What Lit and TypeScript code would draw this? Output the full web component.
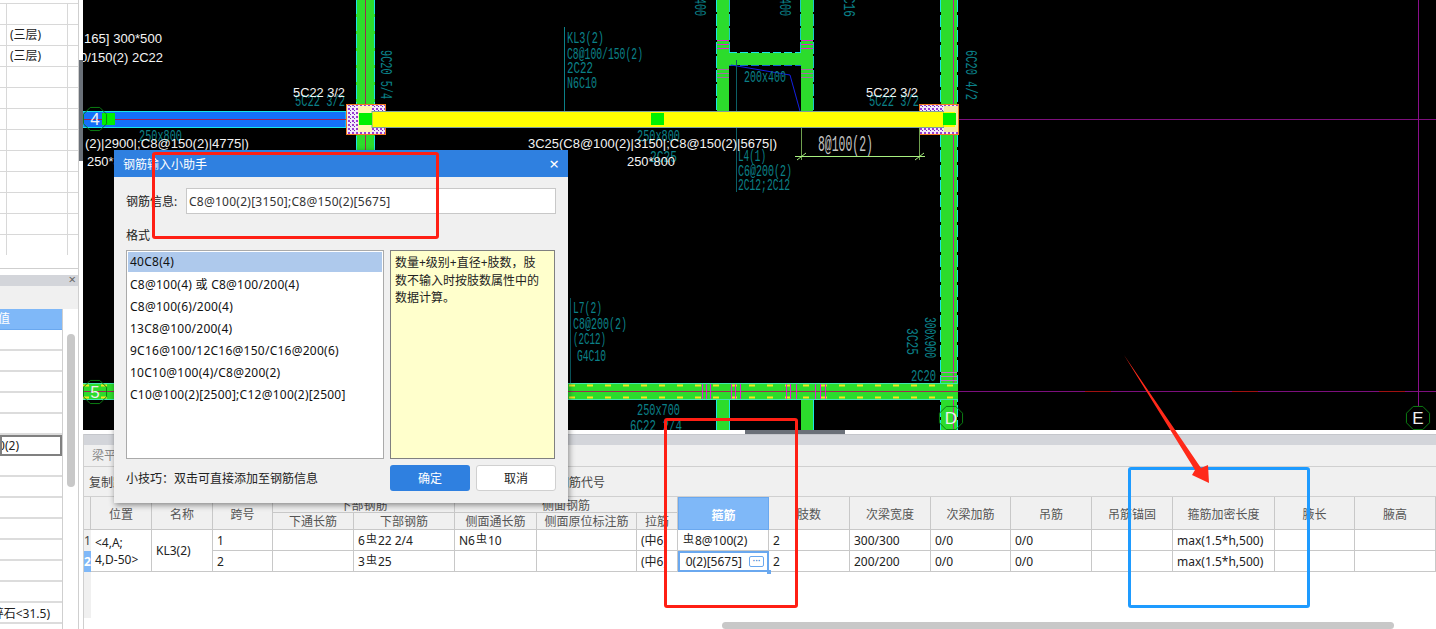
import { css, html, svg, LitElement } from "lit";
import { customElement } from "lit/decorators.js";

const UI_FONT = css`"Noto Sans", "Noto Sans CJK SC", sans-serif`;

// small helpers for the drawing, everything is in page coordinates
const label = (x: number, y: number, s: string, len: number, cls = "teal", rot = false) =>
  svg`<text class=${cls} x=${x} y=${y} textLength=${len} lengthAdjust="spacingAndGlyphs"
    transform=${rot ? `rotate(90 ${x} ${y})` : ""}>${s}</text>`;

const axis = (cx: number, cy: number, s: string) => {
  const pts = Array.from({ length: 8 }, (_, i) => {
    const a = (Math.PI / 4) * i + Math.PI / 8;
    return `${cx + 12.5 * Math.cos(a)},${cy + 12.5 * Math.sin(a)}`;
  }).join(" ");
  return svg`<polygon points=${pts} fill="none" stroke="#0b7d12" stroke-width="1"></polygon>
    <text class="axis" x=${cx} y=${cy + 6} text-anchor="middle">${s}</text>`;
};

const greenSquare = (x: number) =>
  svg`<rect x=${x} y="113" width="13" height="12" fill="#00f000"></rect>`;

const node = (x: number) => svg`
  <rect x=${x + 0.5} y="104.5" width="39" height="30" fill="url(#hatch)" stroke="#f47a20"></rect>`;

const stirrups = (xs: number[]) =>
  xs.map((x) => svg`<line x1=${x + 0.5} x2=${x + 0.5} y1="384" y2="399" stroke="#e020d0" stroke-width="1"></line>`);

@customElement("cad-canvas")
export class CadCanvas extends LitElement {
  static styles = css`
    :host {
      display: block;
      height: 430px;
      background: #000;
    }
    svg {
      display: block;
    }
    text {
      font-family: "Liberation Mono", monospace;
      font-size: 16px;
    }
    .teal {
      fill: #0b8088;
    }
    .white {
      fill: #f4f4f4;
      font-family: "Liberation Sans", sans-serif;
      font-size: 12.5px;
    }
    .dim {
      fill: #c4c4c4;
      font-size: 22px;
    }
    .axis {
      fill: #f0f0f0;
      font-family: "Liberation Sans", sans-serif;
      font-size: 17px;
    }
  `;

  render() {
    return html`
      <svg width="1353" height="430" viewBox="83 0 1353 430">
        <defs>
          <pattern id="hatch" width="4" height="4" patternUnits="userSpaceOnUse">
            <rect width="4" height="4" fill="#f3e8fb"></rect>
            <rect width="2" height="2" fill="#9a3bd0"></rect>
            <rect x="2" y="2" width="1" height="1" fill="#6f2fb0"></rect>
          </pattern>
        </defs>

        <!-- thin axis lines right of the building -->
        <line x1="958" x2="1436" y1="119.5" y2="119.5" stroke="#7d0f7d"></line>
        <line x1="958" x2="1436" y1="391.5" y2="391.5" stroke="#7d0f7d"></line>
        <line x1="1418.5" x2="1418.5" y1="0" y2="406" stroke="#8a0f8a"></line>
        <line x1="1085" x2="1111" y1="391.5" y2="391.5" stroke="#a01010"></line>
        <line x1="1232" x2="1258" y1="391.5" y2="391.5" stroke="#a01010"></line>
        <line x1="1379" x2="1405" y1="391.5" y2="391.5" stroke="#a01010"></line>

        <!-- columns and walls -->
        <rect x="356" y="0" width="19" height="430" fill="#2cdc2c"></rect>
        <line x1="356.5" x2="356.5" y1="0" y2="430" stroke="#19e6e6" stroke-dasharray="14 3"></line>
        <line x1="374.5" x2="374.5" y1="0" y2="430" stroke="#19e6e6" stroke-dasharray="14 3"></line>
        <line x1="365.5" x2="365.5" y1="0" y2="430" stroke="#a02a50"></line>

        <rect x="941" y="0" width="16" height="430" fill="#2cdc2c"></rect>
        <line x1="940.5" x2="940.5" y1="0" y2="430" stroke="#19e6e6" stroke-dasharray="12 3"></line>
        <line x1="957.5" x2="957.5" y1="0" y2="430" stroke="#19e6e6" stroke-dasharray="12 3"></line>
        <line x1="953.5" x2="953.5" y1="0" y2="430" stroke="#c02090"></line>

        <rect x="717" y="0" width="12" height="111" fill="#2cdc2c"></rect>
        <rect x="801" y="0" width="12" height="111" fill="#2cdc2c"></rect>
        <rect x="717" y="53" width="96" height="12" fill="#2cdc2c"></rect>
        <line x1="716.5" x2="716.5" y1="0" y2="111" stroke="#19e6e6" stroke-dasharray="12 2"></line>
        <line x1="729.5" x2="729.5" y1="0" y2="52" stroke="#19c8c8" stroke-dasharray="12 2"></line>
        <line x1="800.5" x2="800.5" y1="0" y2="52" stroke="#19c8c8" stroke-dasharray="12 2"></line>
        <line x1="813.5" x2="813.5" y1="0" y2="111" stroke="#19c8c8" stroke-dasharray="12 2"></line>
        <line x1="729" x2="801" y1="52.5" y2="52.5" stroke="#19e6e6" stroke-dasharray="8 3"></line>
        <line x1="729" x2="801" y1="65.5" y2="65.5" stroke="#1060d0" stroke-dasharray="8 3"></line>
        ${[40.5, 44.5, 48.5, 69.5, 73.5, 77.5].flatMap((y) => [
          svg`<line x1="717" x2="729" y1=${y} y2=${y} stroke=${y < 60 ? "#e020d0" : "#a070a0"}></line>`,
          svg`<line x1="801" x2="813" y1=${y} y2=${y} stroke=${y < 60 ? "#e020d0" : "#a070a0"}></line>`,
        ])}
        <polyline points="731,65 790,75 800,111" fill="none" stroke="#1420e0" stroke-width="1"></polyline>

        <!-- stubs under axis 5 -->
        <rect x="717" y="400" width="12" height="30" fill="#2cdc2c"></rect>
        <rect x="801" y="400" width="12" height="30" fill="#2cdc2c"></rect>
        <line x1="729.5" x2="729.5" y1="400" y2="430" stroke="#19e6e6"></line>
        <line x1="716.5" x2="716.5" y1="400" y2="430" stroke="#19e6e6"></line>
        <line x1="813.5" x2="813.5" y1="400" y2="430" stroke="#19e6e6"></line>

        <!-- axis 5 beam -->
        <rect x="83" y="383" width="875" height="17" fill="#2cdc2c"></rect>
        <line x1="83" x2="958" y1="383.5" y2="383.5" stroke="#40e8b0"></line>
        <line x1="83" x2="958" y1="399.5" y2="399.5" stroke="#40e8b0"></line>
        <line x1="83" x2="958" y1="385.5" y2="385.5" stroke="#f0e820" stroke-width="2" stroke-dasharray="6 12"></line>
        <line x1="83" x2="958" y1="397.5" y2="397.5" stroke="#f0e820" stroke-width="2" stroke-dasharray="6 12"></line>
        <line x1="83" x2="958" y1="391.5" y2="391.5" stroke="#a02a50"></line>
        ${stirrups([702, 706, 710, 731, 735, 740, 786, 790, 796, 815, 820, 825])}
        ${[372.5, 376.5, 380.5].map(
          (y) => svg`<line x1="941" x2="957" y1=${y} y2=${y} stroke="#c070c0"></line>`
        )}

        <!-- selected beam on axis 4 -->
        <rect x="83" y="111.5" width="263" height="16" fill="#1470fa" stroke="#19e6e6"></rect>
        <line x1="83" x2="346" y1="119.5" y2="119.5" stroke="#a02050"></line>
        ${node(346)} ${node(919)}
        <rect x="358" y="106" width="14" height="26" fill="#fff6b0"></rect>
        <rect x="372" y="111.5" width="572" height="16" fill="#ffff00" stroke="#7da0a0"></rect>
        <rect x="944" y="106" width="14" height="26" fill="#f4e8a0"></rect>
        <rect x="944" y="112" width="11" height="15" fill="#ffff00"></rect>
        ${greenSquare(102)} ${greenSquare(359)} ${greenSquare(651)} ${greenSquare(943)}

        <!-- axis bubbles -->
        ${axis(95, 119, "4")} ${axis(95, 392, "5")} ${axis(951, 418, "D")} ${axis(1418, 418, "E")}

        <!-- leader lines -->
        <line x1="564.5" x2="564.5" y1="27" y2="111" stroke="#0b8088"></line>
        <line x1="736.5" x2="736.5" y1="60" y2="111" stroke="#0b5f66"></line>
        <line x1="736.5" x2="736.5" y1="128" y2="192" stroke="#0b5f66"></line>
        <line x1="570.5" x2="570.5" y1="298" y2="383" stroke="#0b5f66"></line>

        <!-- dimension -->
        <line x1="801.5" x2="801.5" y1="128" y2="160" stroke="#6f9f4f"></line>
        <line x1="919.5" x2="919.5" y1="128" y2="160" stroke="#6f9f4f"></line>
        <line x1="795" x2="925" y1="156.5" y2="156.5" stroke="#a8f080"></line>
        <line x1="797" x2="806" y1="160" y2="153" stroke="#a8f080"></line>
        <line x1="915" x2="924" y1="160" y2="153" stroke="#a8f080"></line>
        ${label(818, 151, "8@100(2)", 55, "dim")}

        <!-- teal annotations -->
        ${label(567, 43, "KL3(2)", 37)} ${label(567, 59, "C8@100/150(2)", 76)}
        ${label(567, 73, "2C22", 26)} ${label(567, 88, "N6C10", 30)}
        ${label(744, 82, "200x400", 42)}
        ${label(637, 141, "250x800", 43)} ${label(650, 162, "2C25", 27)}
        ${label(738, 161, "L4(1)", 28)} ${label(738, 176, "C6@200(2)", 54)}
        ${label(738, 190, "2C12;2C12", 52)}
        ${label(573, 313, "L7(2)", 29)} ${label(573, 329, "C8@200(2)", 54)}
        ${label(573, 344, "(2C12)", 33)} ${label(577, 361, "G4C10", 29)}
        ${label(637, 415, "250x700", 43)} ${label(630, 431, "6C22 2/4", 52)}
        ${label(911, 381, "2C20", 25)}
        ${label(295, 106, "5C22 3/2", 50)} ${label(869, 106, "5C22 3/2", 50)}
        ${label(139, 141, "250x800", 43)}
        ${label(381, 50, "9C20 5/4", 49, "teal", true)}
        ${label(966, 50, "6C20 4/2", 50, "teal", true)}
        ${label(925, 317, "300x900", 41, "teal", true)}
        ${label(907, 328, "3C25", 27, "teal", true)}
        ${label(695, -26, "200x400", 42, "teal", true)}
        ${label(780, -26, "200x400", 42, "teal", true)}
        ${label(844, -10, "2C16", 27, "teal", true)}

        <!-- beam text in white -->
        ${label(84, 43, "165] 300*500", 78, "white")}
        ${label(80, 62, "0/150(2) 2C22", 83, "white")}
        ${label(293, 97, "5C22 3/2", 52, "white")} ${label(866, 97, "5C22 3/2", 52, "white")}
        ${label(85, 148, "(2)|2900|;C8@150(2)|4775|)", 164, "white")}
        ${label(87, 166, "250*800", 48, "white")}
        ${label(528, 148, "3C25(C8@100(2)|3150|;C8@150(2)|5675|)", 249, "white")}
        ${label(627, 166, "250*800", 48, "white")}
      </svg>
    `;
  }
}

@customElement("side-panel")
export class SidePanel extends LitElement {
  static styles = css`
    :host {
      display: flex;
      flex-direction: column;
      width: 79px;
      height: 629px;
      box-sizing: border-box;
      border-right: 1px solid #cfcfcf;
      background: #fff;
      font: 12px ${UI_FONT};
      color: #222;
      overflow: hidden;
    }
    .top {
      height: 269px;
      flex: none;
      box-sizing: border-box;
      padding-top: 3px;
      border-bottom: 1px solid #cfcfcf;
    }
    .top-row {
      display: grid;
      grid-template-columns: 7px 61px;
      height: 21px;
      box-sizing: border-box;
      border-top: 1px solid #d8d8d8;
    }
    .top-row span {
      border-right: 1px solid #d8d8d8;
      padding-left: 3px;
      line-height: 20px;
      white-space: nowrap;
    }
    .top-row span:first-child {
      padding: 0;
    }
    .gap {
      height: 6px;
      flex: none;
    }
    .head {
      height: 11px;
      flex: none;
      background: #d3d5da;
      position: relative;
    }
    .close {
      position: absolute;
      right: 2px;
      top: -3px;
      font-size: 13px;
      line-height: 14px;
      color: #666;
    }
    .tools {
      height: 23px;
      flex: none;
      background: #f0f0f0;
    }
    .props {
      flex: 1;
      display: flex;
      min-height: 0;
    }
    .grid {
      width: 63px;
      flex: none;
      border-right: 1px solid #cfcfcf;
      box-sizing: border-box;
    }
    .value-head {
      height: 20px;
      background: #7fb8f8;
      color: #fff;
      font-size: 12px;
      line-height: 20px;
      overflow: hidden;
      border-bottom: 1px solid #6aa8ef;
      box-sizing: content-box;
    }
    .value-head span {
      display: block;
      margin-left: -2px;
    }
    .row {
      height: 21px;
      box-sizing: border-box;
      border-bottom: 2px solid #dcdcdc;
      display: flex;
      justify-content: flex-end;
      align-items: center;
      white-space: nowrap;
      overflow: hidden;
    }
    .row.active {
      border: 2px solid #808080;
    }
    .row span {
      flex: none;
    }
    .row .sel-val {
      margin-right: 41px;
    }
    .row .mix-val {
      margin-right: 12px;
    }
    .track {
      flex: 1;
      position: relative;
    }
    .thumb {
      position: absolute;
      left: 4px;
      top: 25px;
      width: 8px;
      height: 153px;
      border-radius: 4px;
      background: #c8c8c8;
    }
  `;

  render() {
    const topRows = Array.from({ length: 12 }, (_, i) => i);
    const rows = Array.from({ length: 14 }, (_, i) => i);
    return html`
      <div class="top">
        ${topRows.map(
          (i) => html`<div class="top-row"><span></span><span>${i === 1 || i === 2 ? "(三层)" : ""}</span></div>`
        )}
      </div>
      <div class="gap"></div>
      <div class="head"><span class="close">×</span></div>
      <div class="tools"></div>
      <div class="props">
        <div class="grid">
          <div class="value-head"><span>值</span></div>
          ${rows.map((i) => {
            if (i === 5) return html`<div class="row active"><span class="sel-val">C8@100(2)</span></div>`;
            if (i === 13) return html`<div class="row"><span class="mix-val">碎石&lt;31.5)</span></div>`;
            return html`<div class="row"></div>`;
          })}
        </div>
        <div class="track"><div class="thumb"></div></div>
      </div>
    `;
  }
}

const COLS = "7px 61px 61px 60px 81px 101px 82px 100px 41px 91px 81px 81px 80px 81px 81px 102px 80px 81px";

@customElement("beam-table")
export class BeamTable extends LitElement {
  static styles = css`
    :host {
      display: block;
      position: relative;
      font: 12px ${UI_FONT};
      color: #222;
    }
    .grid {
      display: grid;
      grid-template-rows: 16px 17px 21px 21px;
    }
    .c {
      box-sizing: border-box;
      border-right: 1px solid #c8c8c8;
      border-bottom: 1px solid #c8c8c8;
      display: flex;
      align-items: center;
      padding-left: 4px;
      white-space: nowrap;
      overflow: hidden;
      min-width: 0;
    }
    .h {
      justify-content: center;
      padding: 0;
      background: #f0f0f0;
      color: #555;
    }
    .tall {
      padding-top: 2px;
    }
    .hoop {
      background: #7fb8f8;
      border: 1px solid #6aa8ef;
      color: #fff;
      font-weight: 700;
    }
    .num {
      padding: 0;
      justify-content: center;
      background: #f0f0f0;
      color: #444;
      border: 0;
    }
    .num.sel {
      background: #7fb8f8;
      color: #fff;
      font-weight: 700;
    }
    .pos {
      display: block;
      padding: 4px 0 0 4px;
      line-height: 17px;
    }
    .sym {
      font-size: 11px;
      position: relative;
      top: -2px;
      margin: 0 1px;
    }
    .editing {
      border: 2px solid #6aa8ef;
      justify-content: flex-end;
      padding: 0 3px 0 0;
      gap: 7px;
    }
    .clip {
      width: 57px;
      flex: none;
      display: flex;
      justify-content: flex-end;
      overflow: hidden;
    }
    .clip span {
      flex: none;
    }
    .dots {
      flex: none;
      width: 15px;
      height: 11px;
      box-sizing: border-box;
      border: 1px solid #6aa8ef;
      border-radius: 2px;
      color: #3f7fd0;
      font-size: 10px;
      line-height: 6px;
      text-align: center;
      letter-spacing: 0;
    }
    .handle {
      position: absolute;
      left: 683px;
      top: 73px;
      width: 4px;
      height: 4px;
      background: #6aa8ef;
    }
    .rail {
      position: absolute;
      left: 0;
      top: 75px;
      width: 7px;
      height: 46px;
      background: #f0f0f0;
    }
  `;

  private sym() {
    return html`<span class="sym">虫</span>`;
  }

  render() {
    const tail = ["肢数", "次梁宽度", "次梁加筋", "吊筋", "吊筋锚固", "箍筋加密长度", "腋长", "腋高"];
    const r1 = ["2", "300/300", "0/0", "0/0", "", "max(1.5*h,500)", "", ""];
    const r2 = ["2", "200/200", "0/0", "0/0", "", "max(1.5*h,500)", "", ""];
    const span = (col: number, row: string, w = 1) => `grid-column:${col} / span ${w};grid-row:${row}`;
    return html`
      <div class="rail"></div>
      <div class="grid" style="grid-template-columns:${COLS}">
        <div class="c h" style=${span(1, "1 / span 2")}></div>
        <div class="c h tall" style=${span(2, "1 / span 2")}>位置</div>
        <div class="c h tall" style=${span(3, "1 / span 2")}>名称</div>
        <div class="c h tall" style=${span(4, "1 / span 2")}>跨号</div>
        <div class="c h" style=${span(5, "1", 2)}>下部钢筋</div>
        <div class="c h" style=${span(7, "1", 3)}>侧面钢筋</div>
        <div class="c h" style=${span(5, "2")}>下通长筋</div>
        <div class="c h" style=${span(6, "2")}>下部钢筋</div>
        <div class="c h" style=${span(7, "2")}>侧面通长筋</div>
        <div class="c h" style=${span(8, "2")}>侧面原位标注筋</div>
        <div class="c h" style=${span(9, "2")}>拉筋</div>
        <div class="c h hoop tall" style=${span(10, "1 / span 2")}>箍筋</div>
        ${tail.map((t, i) => html`<div class="c h tall" style=${span(11 + i, "1 / span 2")}>${t}</div>`)}

        <div class="c num" style=${span(1, "3")}>1</div>
        <div class="c num sel" style=${span(1, "4")}>2</div>
        <div class="c pos" style=${span(2, "3 / span 2")}>&lt;4,A;<br />4,D-50&gt;</div>
        <div class="c" style=${span(3, "3 / span 2")}>KL3(2)</div>

        <div class="c" style=${span(4, "3")}>1</div>
        <div class="c" style=${span(5, "3")}></div>
        <div class="c" style=${span(6, "3")}>6${this.sym()}22 2/4</div>
        <div class="c" style=${span(7, "3")}>N6${this.sym()}10</div>
        <div class="c" style=${span(8, "3")}></div>
        <div class="c" style=${span(9, "3")}>(中6)</div>
        <div class="c" style=${span(10, "3")}>${this.sym()}8@100(2)</div>
        ${r1.map((t, i) => html`<div class="c" style=${span(11 + i, "3")}>${t}</div>`)}

        <div class="c" style=${span(4, "4")}>2</div>
        <div class="c" style=${span(5, "4")}></div>
        <div class="c" style=${span(6, "4")}>3${this.sym()}25</div>
        <div class="c" style=${span(7, "4")}></div>
        <div class="c" style=${span(8, "4")}></div>
        <div class="c" style=${span(9, "4")}>(中6)</div>
        <div class="c editing" style=${span(10, "4")}>
          <div class="clip"><span>C8@100(2)[3150];C8@150(2)[5675]</span></div><span class="dots">···</span>
        </div>
        ${r2.map((t, i) => html`<div class="c" style=${span(11 + i, "4")}>${t}</div>`)}
      </div>
      <div class="handle"></div>
    `;
  }
}

@customElement("rebar-dialog")
export class RebarDialog extends LitElement {
  static styles = css`
    :host {
      position: absolute;
      left: 114px;
      top: 150px;
      width: 454px;
      height: 353px;
      display: flex;
      flex-direction: column;
      background: #f0f0f0;
      box-shadow: 1px 2px 6px rgba(0, 0, 0, 0.45);
      font: 12px ${UI_FONT};
      color: #222;
    }
    .title {
      height: 27px;
      flex: none;
      background: #2f80e0;
      color: #fff;
      display: flex;
      align-items: center;
      justify-content: space-between;
      padding: 0 9px;
    }
    .close {
      font-size: 17px;
      line-height: 17px;
    }
    .body {
      flex: 1;
      display: flex;
      flex-direction: column;
      padding: 11px 12px 12px;
    }
    .info {
      display: flex;
      align-items: center;
    }
    .info span {
      width: 60px;
      flex: none;
    }
    .info input {
      width: 370px;
      height: 26px;
      box-sizing: border-box;
      border: 1px solid #c8c8c8;
      background: #fff;
      font: inherit;
      letter-spacing: 0.25px;
      color: #333;
      padding: 0 2px;
      margin: 0;
      outline: none;
    }
    .fmt {
      margin-top: 13px;
      line-height: 18px;
    }
    .panes {
      display: flex;
      gap: 6px;
      margin-top: 5px;
      height: 209px;
    }
    .list {
      width: 258px;
      box-sizing: border-box;
      border: 1px solid #aaa;
      background: #fff;
      padding: 1px;
      letter-spacing: 0.25px;
    }
    .item {
      height: 22px;
      line-height: 21px;
      padding-left: 2px;
      white-space: nowrap;
      color: #111;
    }
    .item.sel {
      height: 20px;
      margin-bottom: 2px;
      line-height: 20px;
      background: #aec9ec;
    }
    .note {
      width: 165px;
      box-sizing: border-box;
      border: 1px solid #808080;
      background: #ffffcc;
      padding: 3px 4px;
      line-height: 17.5px;
      color: #222;
    }
    .foot {
      display: flex;
      align-items: center;
      margin-top: 6px;
      height: 26px;
    }
    .tip {
      width: 264px;
      flex: none;
    }
    button {
      width: 80px;
      height: 26px;
      box-sizing: border-box;
      border-radius: 3px;
      font: inherit;
      padding: 0;
      margin: 0;
    }
    .ok {
      background: #2f80e0;
      border: 0;
      color: #fff;
      margin-right: 6px;
    }
    .cancel {
      background: #fff;
      border: 1px solid #d0d0d0;
      color: #222;
    }
  `;

  render() {
    const items = [
      "40C8(4)",
      "C8@100(4) 或 C8@100/200(4)",
      "C8@100(6)/200(4)",
      "13C8@100/200(4)",
      "9C16@100/12C16@150/C16@200(6)",
      "10C10@100(4)/C8@200(2)",
      "C10@100(2)[2500];C12@100(2)[2500]",
    ];
    return html`
      <div class="title"><span>钢筋输入小助手</span><span class="close">×</span></div>
      <div class="body">
        <div class="info">
          <span>钢筋信息:</span>
          <input value="C8@100(2)[3150];C8@150(2)[5675]" />
        </div>
        <div class="fmt">格式</div>
        <div class="panes">
          <div class="list">
            ${items.map((t, i) => html`<div class="item ${i === 0 ? "sel" : ""}">${t}</div>`)}
          </div>
          <div class="note">数量+级别+直径+肢数，肢<br />数不输入时按肢数属性中的<br />数据计算。</div>
        </div>
        <div class="foot">
          <span class="tip">小技巧：双击可直接添加至钢筋信息</span>
          <button class="ok">确定</button>
          <button class="cancel">取消</button>
        </div>
      </div>
    `;
  }
}

@customElement("app-root")
export class AppRoot extends LitElement {
  static styles = css`
    :host {
      display: block;
      position: relative;
      width: 1436px;
      height: 629px;
      overflow: hidden;
      background: #fff;
      font: 12px ${UI_FONT};
    }
    .shell {
      display: flex;
      height: 100%;
    }
    .split {
      width: 4px;
      flex: none;
      position: relative;
    }
    .grip {
      position: absolute;
      left: 0;
      top: 60px;
      width: 4px;
      height: 101px;
      background: #6a7078;
    }
    .main {
      flex: 1;
      min-width: 0;
      display: flex;
      flex-direction: column;
    }
    .band {
      height: 4px;
      flex: none;
      position: relative;
    }
    .band i {
      position: absolute;
      left: 662px;
      top: 0;
      width: 100px;
      height: 4px;
      background: #6a7078;
    }
    .lower {
      flex: 1;
      border-left: 1px solid #cfcfcf;
      display: flex;
      flex-direction: column;
      position: relative;
    }
    .caption {
      height: 11px;
      flex: none;
      background: #d3d5da;
      border-top: 1px solid #c4c6cb;
      box-sizing: border-box;
    }
    .tabs {
      height: 22px;
      flex: none;
      box-sizing: border-box;
      background: #f0f0f0;
      border-bottom: 1px solid #d0d0d0;
      color: #888;
      padding: 0 0 0 8px;
      line-height: 22px;
    }
    .tools {
      height: 30px;
      flex: none;
      box-sizing: border-box;
      background: #f0f0f0;
      border-bottom: 1px solid #d0d0d0;
      padding-left: 5px;
      display: flex;
      align-items: center;
      color: #444;
    }
    .tools div {
      width: 516px;
      display: flex;
      justify-content: space-between;
      white-space: nowrap;
    }
    .hbar {
      position: absolute;
      left: 638px;
      bottom: 0;
      width: 672px;
      height: 7px;
      border-radius: 4px;
      background: #c8c8c8;
    }
    .mark {
      position: absolute;
      box-sizing: border-box;
      border: 3px solid #ff1f14;
      border-radius: 3px;
      pointer-events: none;
    }
    .mark.dialog {
      left: 152px;
      top: 152px;
      width: 287px;
      height: 87px;
    }
    .mark.hoop {
      left: 664px;
      top: 418px;
      width: 134px;
      height: 190px;
    }
    .mark.blue {
      left: 1128px;
      top: 467px;
      width: 182px;
      height: 141px;
      border-color: #1e9bff;
    }
    .arrow {
      position: absolute;
      left: 1120px;
      top: 350px;
      pointer-events: none;
    }
  `;

  render() {
    return html`
      <div class="shell">
        <side-panel></side-panel>
        <div class="split"><div class="grip"></div></div>
        <div class="main">
          <cad-canvas></cad-canvas>
          <div class="band"><i></i></div>
          <div class="lower">
            <div class="caption"></div>
            <div class="tabs">梁平法表格</div>
            <div class="tools">
              <div>
                <span>复制跨数据</span><span>粘贴跨数据</span><span>输入当前列数据</span><span>悬臂钢筋代号</span>
              </div>
            </div>
            <beam-table></beam-table>
            <div class="hbar"></div>
          </div>
        </div>
      </div>
      <rebar-dialog></rebar-dialog>
      <div class="mark dialog"></div>
      <div class="mark hoop"></div>
      <div class="mark blue"></div>
      <svg class="arrow" width="100" height="140" viewBox="1120 350 100 140">
        <polygon points="1124,355 1201,468 1208,465 1209,483 1192,475 1195,470" fill="#ff2a1a"></polygon>
      </svg>
    `;
  }
}
